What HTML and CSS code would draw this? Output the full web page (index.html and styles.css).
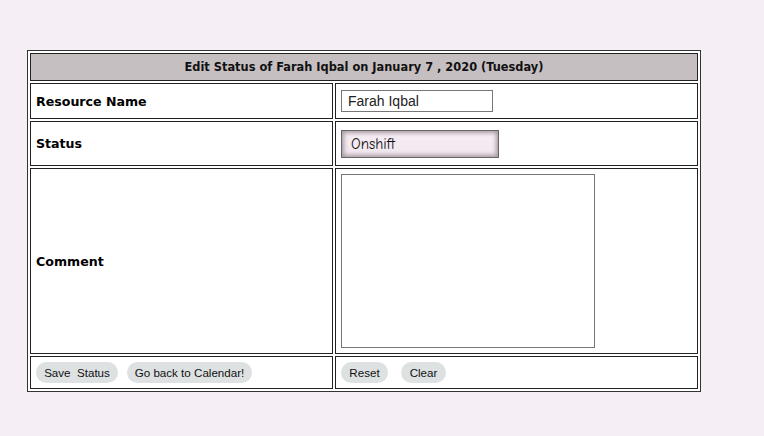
FILE: index.html
```html
<!DOCTYPE html>
<html>
<head>
<meta charset="utf-8">
<link rel="stylesheet" href="styles.css">
</head>
<body>
<div class="page">
<table class="form">
  <colgroup><col class="c1"><col class="c2"></colgroup>
  <tr class="r-head">
    <td class="head" colspan="2">Edit Status of Farah Iqbal on January 7 , 2020 (Tuesday)</td>
  </tr>
  <tr class="r-name">
    <td class="label">Resource Name</td>
    <td class="field"><input class="text" type="text" value="Farah Iqbal"></td>
  </tr>
  <tr class="r-status">
    <td class="label">Status</td>
    <td class="field"><div class="status">Onshift</div></td>
  </tr>
  <tr class="r-comment">
    <td class="label">Comment</td>
    <td class="field top"><textarea class="area"></textarea></td>
  </tr>
  <tr class="r-actions">
    <td class="actions left"><button class="btn save">Save&nbsp; Status</button><button class="btn back">Go back to Calendar!</button></td>
    <td class="actions right"><button class="btn reset">Reset</button><button class="btn clear">Clear</button></td>
  </tr>
</table>
</div>
</body>
</html>
```

FILE: styles.css
```css
html, body {
  margin: 0;
  padding: 0;
  background: #f5eff5;
}
.page {
  padding: 50px 0 0 27px;
}
.form {
  border: 1px solid #333;
  border-spacing: 2px;
  border-collapse: separate;
  width: 674px;
  background: #fff;
  table-layout: fixed;
}
.c1 { width: 303px; }
.form td {
  border: 1px solid #222;
  padding: 0;
}
.r-head { height: 28px; }
.r-name { height: 36px; }
.r-status { height: 45px; }
.r-comment { height: 186px; }
.r-actions { height: 33px; }
.head {
  background: #c6bfc2;
  text-align: center;
  font-family: "DejaVu Sans", Verdana, sans-serif;
  font-weight: bold;
  font-size: 11.4px;
  color: #111;
}
.label {
  padding: 0 5px !important;
  font-family: "DejaVu Sans", Verdana, sans-serif;
  font-weight: bold;
  font-size: 12.6px;
  color: #000;
}
.field {
  padding: 0 5px !important;
}
.field.top {
  vertical-align: top;
  padding-top: 5px !important;
}
.text {
  box-sizing: border-box;
  width: 152px;
  height: 22px;
  border: 1px solid #777;
  padding: 0 6px;
  font-family: "Liberation Sans", Arial, sans-serif;
  font-size: 14px;
  color: #222;
  display: block;
  margin: 0;
}
.status {
  box-sizing: border-box;
  width: 158px;
  height: 28px;
  border: 1px solid #666;
  background: linear-gradient(#f7eef5, #f1e6ee);
  box-shadow: inset 0 0 4px 2px #a79aa3;
  font-family: "Comic Sans MS", "Comic Neue", cursive;
  font-size: 15px;
  line-height: 26px;
  padding-left: 9px;
  color: #111;
}
.area {
  box-sizing: border-box;
  display: block;
  width: 254px;
  height: 174px;
  border: 1px solid #777;
  margin: 0;
  resize: none;
}
.actions {
  padding: 0 5px !important;
  white-space: nowrap;
}
.btn {
  font-family: "Liberation Sans", Arial, sans-serif;
  font-size: 11.6px;
  color: #111;
  background: #dde1e2;
  border: none;
  border-radius: 11px;
  height: 21px;
  padding: 0;
  margin: 0;
  vertical-align: middle;
  white-space: nowrap;
}
.save { width: 82px; margin-right: 9px; }
.back { width: 125px; }
.reset { width: 47px; margin-right: 13px; }
.clear { width: 45px; }
```
